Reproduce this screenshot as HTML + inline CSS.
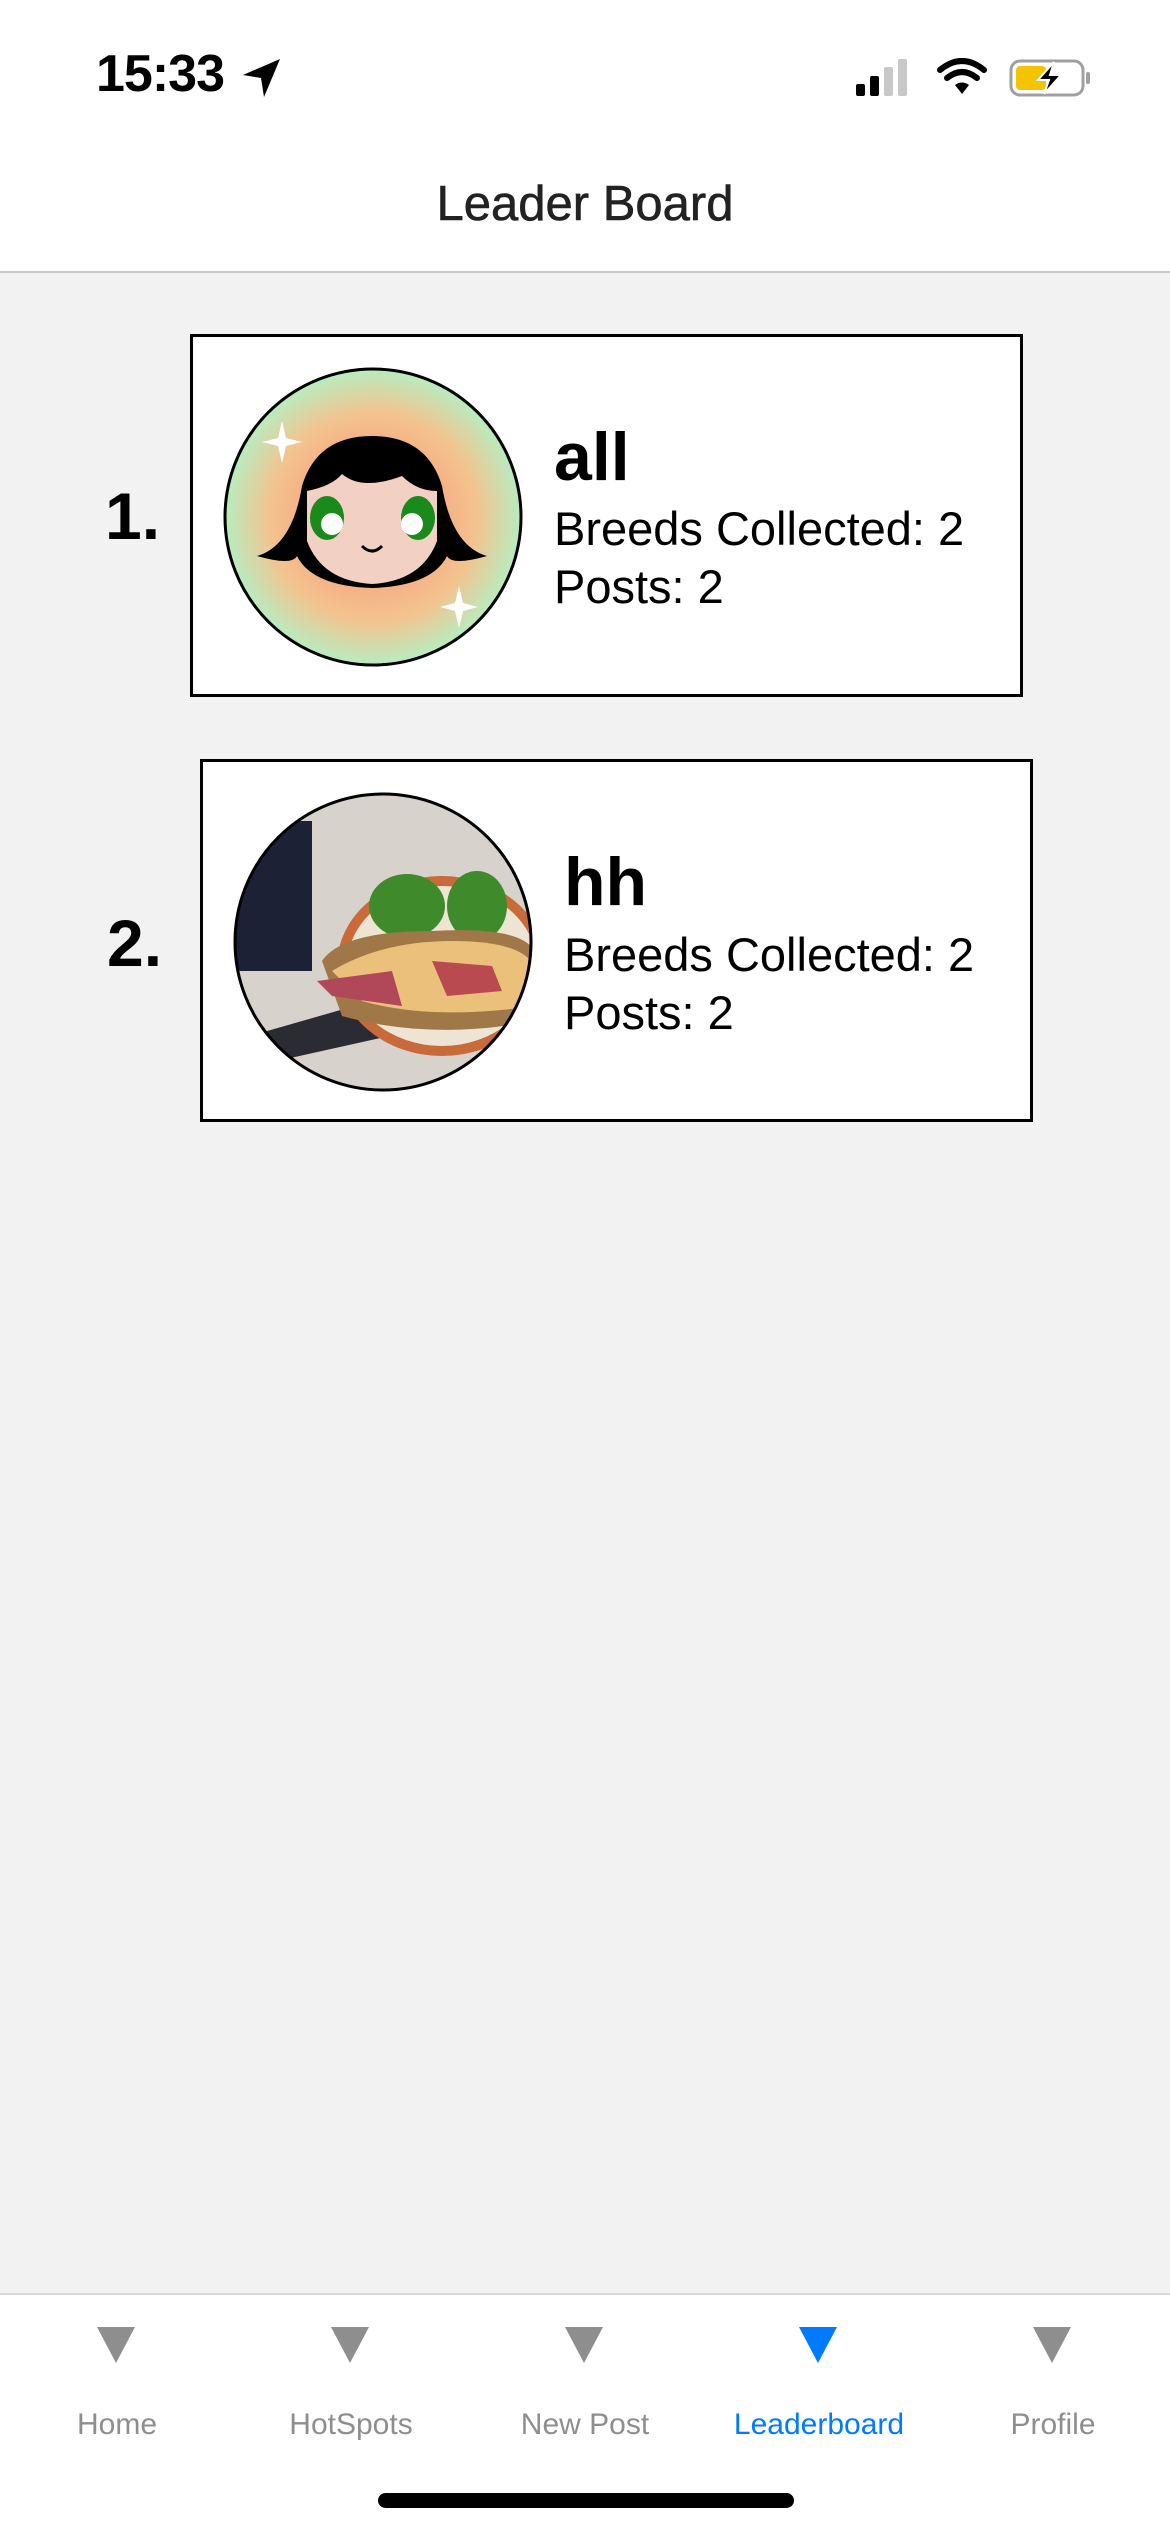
<!DOCTYPE html>
<html><head><meta charset="utf-8"><style>
*{margin:0;padding:0;box-sizing:border-box}
body{width:1170px;height:2532px;background:#f2f2f2;font-family:"Liberation Sans",sans-serif;position:relative;overflow:hidden}
.abs{position:absolute}
.top{left:0;top:0;width:1170px;height:273px;background:#fff;border-bottom:2px solid #c8c8c8}
.card{position:absolute;width:833px;height:363px;background:#fff;border:3px solid #000}
.rank{position:absolute;font-weight:bold;font-size:66px;color:#000}
.name{position:absolute;font-weight:bold;font-size:68px;color:#000}
.info{position:absolute;font-size:47px;color:#000;line-height:58px;white-space:nowrap}
.tab{position:absolute;top:2293px;left:0;width:1170px;height:239px;background:#fff;border-top:2px solid #d8d8d8}
.ti{position:absolute;width:234px;text-align:center;font-size:30px;color:#8e8e8e;top:2408px}
.tri{position:absolute;top:2327px;width:0;height:0;border-left:19px solid transparent;border-right:19px solid transparent;border-top:36px solid #8e8e8e}
</style></head><body>
<div class="abs top"></div>
<div class="abs" style="left:96px;top:44px;font-size:52px;font-weight:bold;letter-spacing:-1px">15:33</div>
<svg class="abs" style="left:240px;top:56px" width="44" height="44" viewBox="0 0 44 44"><path d="M40 3 L3 19 L21 22 L24 41 Z" fill="#000"/></svg>
<svg class="abs" style="left:854px;top:58px" width="240" height="40" viewBox="0 0 240 40">
<rect x="2" y="26" width="9" height="12" rx="2" fill="#000"/>
<rect x="16" y="18" width="9" height="20" rx="2" fill="#000"/>
<rect x="30" y="9" width="9" height="29" rx="2" fill="#c8c8c8"/>
<rect x="44" y="1" width="9" height="37" rx="2" fill="#c8c8c8"/>
<path d="M86 12 Q108 -6 130 12" stroke="#000" stroke-width="6" fill="none" stroke-linecap="round"/>
<path d="M93 20 Q108 8 123 20" stroke="#000" stroke-width="6" fill="none" stroke-linecap="round"/>
<path d="M101 27 L108 36 L115 27 Q108 22 101 27Z" fill="#000"/>
<rect x="157" y="3" width="72" height="34" rx="9" fill="none" stroke="#a0a0a0" stroke-width="3"/>
<rect x="162" y="8" width="30" height="24" rx="4" fill="#f5c400"/>
<rect x="232" y="14" width="4" height="12" rx="2" fill="#a0a0a0"/>
<path d="M200 4 L184 22 L195 22 L190 36 L207 17 L196 17 Z" fill="#000" stroke="#fff" stroke-width="2"/>
</svg>
<div class="abs" style="left:0;width:1170px;top:176px;text-align:center;font-size:49px;color:#222;-webkit-text-stroke:0.6px #222">Leader Board</div>

<div class="rank" style="left:105px;top:478px">1.</div>
<div class="card" style="left:190px;top:334px"></div>
<svg class="abs" style="left:222px;top:366px" width="302" height="302" viewBox="0 0 302 302">
<defs><radialGradient id="g1"><stop offset="0.3" stop-color="#f6a07e"/><stop offset="0.7" stop-color="#f3c38e"/><stop offset="1" stop-color="#b8ecc0"/></radialGradient></defs>
<circle cx="151" cy="151" r="148" fill="url(#g1)" stroke="#000" stroke-width="3"/>
<path d="M35 190 Q70 180 80 120 Q95 70 150 70 Q205 70 220 120 Q230 180 265 190 Q230 200 225 190 Q210 220 150 222 Q90 220 75 190 Q70 200 35 190Z" fill="#000"/>
<path d="M85 125 Q110 120 120 108 Q140 125 180 110 Q195 125 215 125 L215 175 Q200 215 150 218 Q100 215 85 175Z" fill="#f3d0c4"/>
<ellipse cx="105" cy="152" rx="17" ry="22" fill="#1a8a1a"/><ellipse cx="196" cy="152" rx="17" ry="22" fill="#1a8a1a"/>
<circle cx="110" cy="158" r="11" fill="#fff"/><circle cx="190" cy="158" r="11" fill="#fff"/>
<path d="M140 180 Q150 190 160 180" stroke="#000" stroke-width="3" fill="none"/>
<path d="M60 55 L64 72 L80 76 L64 80 L60 97 L56 80 L40 76 L56 72Z" fill="#fff"/>
<path d="M237 220 L241 237 L256 241 L241 245 L237 262 L233 245 L218 241 L233 237Z" fill="#fff"/>
</svg>
<div class="name" style="left:554px;top:418px">all</div>
<div class="info" style="left:554px;top:500px">Breeds Collected: 2<br>Posts: 2</div>

<div class="rank" style="left:107px;top:905px">2.</div>
<div class="card" style="left:200px;top:759px"></div>
<svg class="abs" style="left:232px;top:791px" width="302" height="302" viewBox="0 0 302 302">
<defs><clipPath id="c2"><circle cx="151" cy="151" r="148"/></clipPath></defs>
<g clip-path="url(#c2)">
<rect width="302" height="302" fill="#d8d2cc"/>
<rect x="0" y="30" width="80" height="150" fill="#1d2135"/>
<path d="M0 250 L140 210 L180 240 L0 280Z" fill="#2b2b33"/>
<ellipse cx="210" cy="175" rx="105" ry="90" fill="#c86a3a"/>
<ellipse cx="210" cy="175" rx="95" ry="80" fill="#eee4d4"/>
<ellipse cx="175" cy="115" rx="38" ry="32" fill="#3f8a2a"/>
<ellipse cx="245" cy="115" rx="30" ry="35" fill="#3f8a2a"/>
<path d="M90 170 Q110 140 200 140 Q290 135 302 160 L302 230 Q200 250 110 225Z" fill="#a07848"/>
<path d="M100 180 Q150 150 220 150 Q290 150 302 175 L302 215 Q200 230 130 210Z" fill="#eac07a"/>
<path d="M85 190 L160 180 L170 215 L100 205Z" fill="#b0485a"/>
<path d="M200 170 L260 175 L270 200 L215 205Z" fill="#b84a50"/>
</g>
<circle cx="151" cy="151" r="148" fill="none" stroke="#000" stroke-width="3"/>
</svg>
<div class="name" style="left:564px;top:843px">hh</div>
<div class="info" style="left:564px;top:926px">Breeds Collected: 2<br>Posts: 2</div>

<div class="tab"></div>
<div class="tri" style="left:97px"></div>
<div class="tri" style="left:331px"></div>
<div class="tri" style="left:565px"></div>
<div class="tri" style="left:799px;border-top-color:#007aff"></div>
<div class="tri" style="left:1033px"></div>
<div class="ti" style="left:0">Home</div>
<div class="ti" style="left:234px">HotSpots</div>
<div class="ti" style="left:468px">New Post</div>
<div class="ti" style="left:702px;color:#007aff">Leaderboard</div>
<div class="ti" style="left:936px">Profile</div>
<div class="abs" style="left:378px;top:2493px;width:416px;height:15px;border-radius:8px;background:#000"></div>
</body></html>
